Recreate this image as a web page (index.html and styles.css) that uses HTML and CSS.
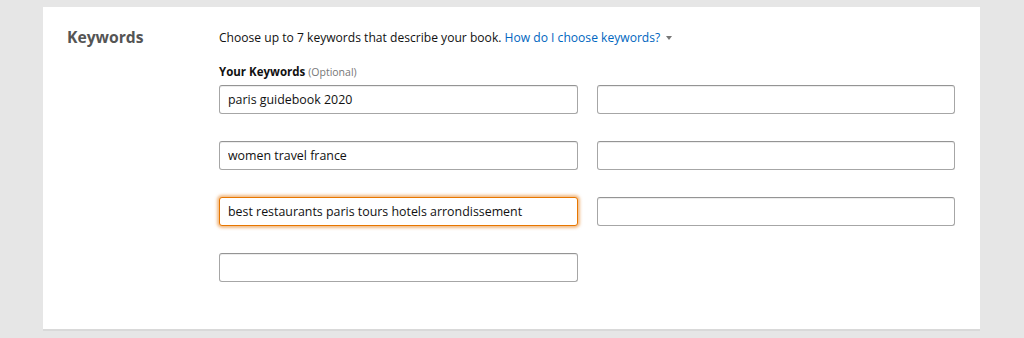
FILE: index.html
```html
<!doctype html>
<html>
	<head>
		<meta charset="utf-8">
		<title>Keywords</title>
		<link rel="stylesheet" href="styles.css">
	</head>
	<body>
		<div class="card">
			<h2 class="side">Keywords</h2>
			<div class="main">
				<p class="intro">Choose up to 7 keywords that describe your book. <a href="#" class="help">How do I choose keywords?</a> <span class="caret"></span></p>
				<div class="label"><b>Your Keywords</b> <span class="opt">(Optional)</span></div>
				<div class="grid">
					<input type="text" value="paris guidebook 2020">
					<input type="text" value="">
					<input type="text" value="women travel france">
					<input type="text" value="">
					<input type="text" class="focus" value="best restaurants paris tours hotels arrondissement">
					<input type="text" value="">
					<input type="text" value="">
				</div>
			</div>
		</div>
	</body>
</html>
```

FILE: styles.css
```css
* {
	margin: 0;
	padding: 0;
	box-sizing: border-box;
}
body {
	background-color: #e6e6e6;
	font-family: "Open Sans", "Noto Sans", sans-serif;
	color: #111;
}
.card {
	display: flex;
	width: 937px;
	height: 324px;
	margin: 7px 0 0 43px;
	background-color: #fff;
	border-bottom: 2px solid #d9d9d9;
	padding-top: 19px;
}
.side {
	width: 176px;
	padding-left: 24px;
	font-size: 15.7px;
	font-weight: 700;
	color: #555;
	line-height: 22px;
}
.main {
	width: 736px;
}
.intro {
	font-size: 12.1px;
	line-height: 24px;
}
.help {
	color: #0066c0;
	text-decoration: none;
}
.caret {
	display: inline-block;
	vertical-align: middle;
	margin: -2px 0 0 3px;
	border-left: 3px solid transparent;
	border-right: 3px solid transparent;
	border-top: 4px solid #777;
}
.label {
	margin-top: 14px;
	font-size: 11.5px;
	line-height: 16px;
}
.opt {
	color: #777;
	font-size: 10.5px;
}
.grid {
	display: grid;
	grid-template-columns: 359px 358px;
	column-gap: 19px;
	row-gap: 27px;
	margin-top: 5px;
}
.grid input {
	height: 29px;
	border: 1px solid #a6a6a6;
	border-top-color: #949494;
	border-radius: 3px;
	padding: 0 8px;
	font-family: "Open Sans", "Noto Sans", sans-serif;
	font-size: 12.4px;
	color: #111;
	outline: none;
	box-shadow: 0 1px 0 rgba(255,255,255,.5), 0 1px 0 rgba(0,0,0,.07) inset;
}
.grid input.focus {
	border-color: #e77600;
	box-shadow: 0 0 3px 2px rgba(228,121,17,.5);
}
```
